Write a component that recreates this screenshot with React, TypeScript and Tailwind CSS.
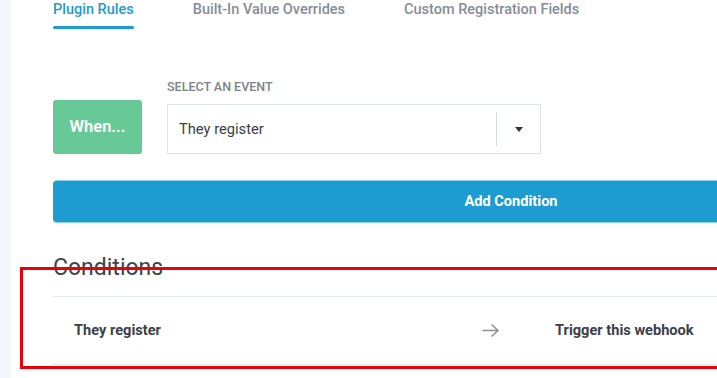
const tabs = ['Plugin Rules', 'Built-In Value Overrides', 'Custom Registration Fields']

function Arrow() {
  return (
    <svg width="17" height="13" viewBox="0 0 17 13" fill="none" stroke="#8b9099" strokeWidth="1.6" strokeLinecap="round" strokeLinejoin="round">
      <path d="M1 6.5h15" />
      <path d="M10 1l6 5.5-6 5.5" />
    </svg>
  )
}

export default function App() {
  return (
    <div className="relative flex w-[717px] h-[378px] overflow-hidden bg-white font-['Roboto','Liberation_Sans',sans-serif]">
      {/* side strip */}
      <div className="w-[11px] shrink-0 bg-[#f4f6f9]" />

      <div className="flex-1 min-w-0 pl-[42px]">
        {/* Tabs */}
        <div className="flex gap-[59px]">
          {tabs.map((t, i) => (
            <div key={t} className="flex flex-col">
              <span className={`text-[14.5px] leading-5 font-medium ${i === 0 ? 'text-[#1e9bd0]' : 'text-[#868d98]'}`}>{t}</span>
              {i === 0 && <div className="mt-[6px] h-[3px] rounded-full bg-[#1e9bd0]" />}
            </div>
          ))}
        </div>

        {/* Event row */}
        <div className="mt-[50px] flex items-end gap-[25px]">
          <div className="w-[89px] h-[54px] rounded-[3px] bg-[#67c995] flex items-center justify-center text-white text-[16.5px] font-semibold">
            When...
          </div>
          <div className="flex flex-col">
            <span className="text-[12.5px] leading-4 font-medium text-[#7c828b] uppercase">Select an event</span>
            <div className="mt-[9px] w-[374px] h-[50px] border border-[#dfe2e6] flex items-center">
              <span className="flex-1 pl-[11px] text-[14.7px] text-[#3a3e45]">They register</span>
              <div className="w-px h-[34px] bg-[#d6d9dd]" />
              <div className="w-[43px] flex justify-center">
                <div className="w-0 h-0 border-l-[4.5px] border-r-[4.5px] border-t-[5px] border-l-transparent border-r-transparent border-t-[#333]" />
              </div>
            </div>
          </div>
        </div>

        {/* Add condition */}
        <div className="mt-[26px] w-[916px] h-[43px] rounded-l-[4px] bg-[#1c9cd0] border-y border-[#8ad3ef] flex items-center justify-center text-white text-[14.6px] font-bold">
          Add Condition
        </div>

        {/* Conditions */}
        <h2 className="mt-[31px] text-[23px] leading-7 font-normal text-[#3f434a]">Conditions</h2>
        <div className="mt-[14px] h-[69px] border-y border-[#e6e9ec] flex items-center text-[14.6px] font-bold text-[#3c4048]">
          <span className="w-[429px] pl-[21px]">They register</span>
          <span className="w-[73px]"><Arrow /></span>
          <span>Trigger this webhook</span>
        </div>
      </div>

      {/* highlight overlay */}
      <div className="absolute left-[20px] top-[267px] w-[720px] h-[102px] border-[3px] border-[#e8000b] pointer-events-none" />
    </div>
  )
}
